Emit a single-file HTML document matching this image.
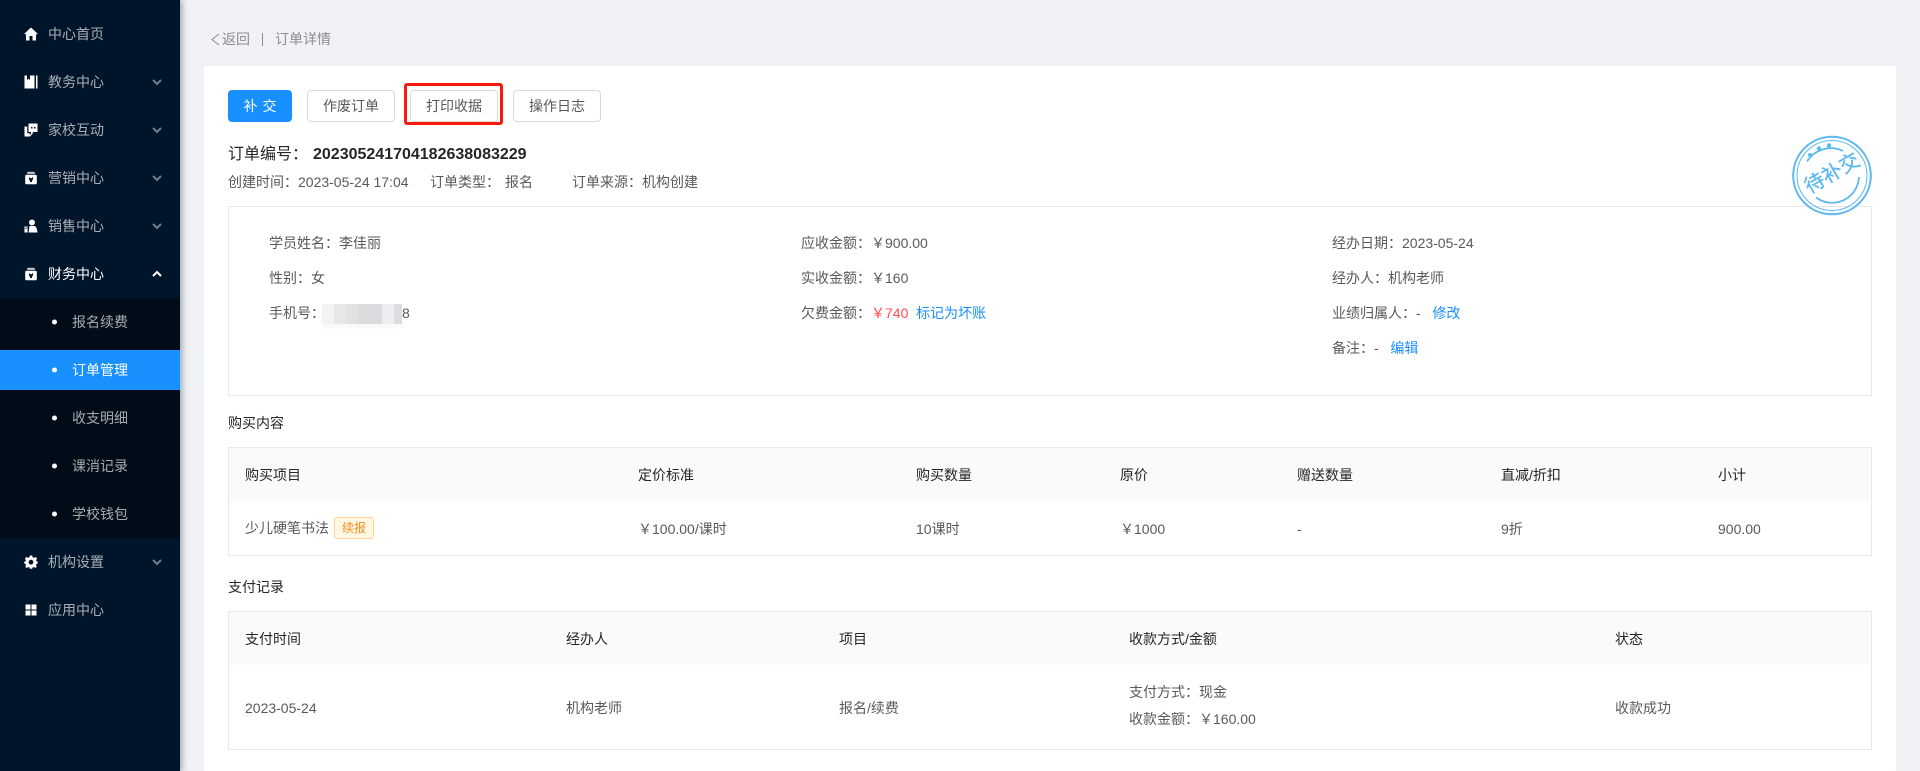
<!DOCTYPE html>
<html lang="zh"><head><meta charset="utf-8"><title>订单详情</title>
<style>
html,body{margin:0;padding:0}
body{width:1920px;height:771px;overflow:hidden;position:relative;background:#f0f2f5;font-family:"Liberation Sans","Noto Sans CJK SC",sans-serif;font-size:14px;color:#595959}
.t{position:absolute;white-space:nowrap;line-height:20px;transform:translateY(-10px)}
#side{position:absolute;left:0;top:0;width:180px;height:771px;background:#001529;box-shadow:2px 0 6px rgba(0,21,41,.35)}
#sub{position:absolute;left:0;top:298px;width:180px;height:240px;background:#000c17}
#act{position:absolute;left:0;top:350px;width:180px;height:40px;background:#1890ff}
.m{position:absolute;left:48px;font-size:14px;color:rgba(255,255,255,.65);line-height:20px;transform:translateY(-10px);white-space:nowrap}
.s{left:72px}
.dot{position:absolute;left:52px;width:5px;height:5px;border-radius:50%;background:#fff;transform:translateY(-2.5px)}
.ic{position:absolute;left:24px;width:14px;height:14px;transform:translateY(-7px)}
.ch{position:absolute;left:152px;width:10px;height:7px;transform:translateY(-3.5px)}
#card{position:absolute;left:204px;top:66px;width:1692px;height:705px;background:#fff;border-radius:2px}
.b{position:absolute;top:90px;height:32px;box-sizing:border-box;border:1px solid #d9d9d9;border-radius:4px;background:#fff;text-align:center;line-height:30px;font-size:14px;color:#595959;width:88px}
.box{position:absolute;box-sizing:border-box;border:1px solid #e8e8e8;left:228px;width:1644px}
.hd{position:absolute;left:229px;width:1642px;height:53px;background:#fafafa}
.h{color:#262626;font-size:14px}
.l{font-size:14px;color:#595959}
.sec{color:#262626;font-size:14px}
.blue{color:#1890ff}
</style></head><body>
<div id="side">
<div id="sub"></div><div id="act"></div>
<svg class="ic" style="top:34px" viewBox="0 0 14 14"><path fill="#fff" d="M7 0.500 0.400 6.600 1.200 7.600 2 7V13.500H5.500V9H8.500V13.500H12V7L12.800 7.600 13.600 6.600Z"/></svg>
<div class="m" style="top:34px">中心首页</div>
<svg class="ic" style="top:82px" viewBox="0 0 14 14"><path fill="#fff" d="M0.500 0.500H10.500V13.500H0.500ZM3 0.500V5L4.500 3.800 6 5V0.500ZM12 0.500H13.500V13.500H12Z" fill-rule="evenodd"/></svg>
<div class="m" style="top:82px">教务中心</div>
<svg class="ic" style="top:130px" viewBox="0 0 14 14"><path fill="#fff" fill-rule="evenodd" d="M4.500 0.500H13.500V9H9.500L7 11V9H4.500ZM7 4V5.500H8.500V4ZM10 4V5.500H11.500V4ZM0.500 3.500H3.200V10.300H5.800V12L8 10.300H9.200L6 13.500H0.500Z"/></svg>
<div class="m" style="top:130px">家校互动</div>
<svg class="ic" style="top:178px" viewBox="0 0 14 14"><path fill="#b8bcc2" d="M3.500 0.800H10.500L11 3H3Z"/><path fill="#fff" fill-rule="evenodd" d="M2.500 3.800H11.500Q12.800 3.800 12.800 5.100V12Q12.800 13.300 11.500 13.300H2.500Q1.200 13.300 1.200 12V5.100Q1.200 3.800 2.500 3.800ZM5 6V8.500L6 9.500V11H8V9.500L9 8.500V6L7 7.500Z"/></svg>
<div class="m" style="top:178px">营销中心</div>
<svg class="ic" style="top:226px" viewBox="0 0 14 14"><path fill="#fff" fill-rule="evenodd" d="M8 0.500A3 3 0 1 1 7.990 6.500 3 3 0 0 1 8 0.500ZM5.500 7H10.500Q13 7.500 13.500 13.500H4.500ZM0.500 7.500H3.500V13.500H0.500ZM1.500 8.500V10H2.500V8.500Z"/></svg>
<div class="m" style="top:226px">销售中心</div>
<svg class="ic" style="top:274px" viewBox="0 0 14 14"><path fill="#b8bcc2" d="M3.500 0.800H10.500L11 3H3Z"/><path fill="#fff" fill-rule="evenodd" d="M2.500 3.800H11.500Q12.800 3.800 12.800 5.100V12Q12.800 13.300 11.500 13.300H2.500Q1.200 13.300 1.200 12V5.100Q1.200 3.800 2.500 3.800ZM5 6V8.500L6 9.500V11H8V9.500L9 8.500V6L7 7.500Z"/></svg>
<div class="m" style="top:274px;color:#fff">财务中心</div>
<svg class="ch" style="top:82px" viewBox="0 0 10 7"><path d="M1 1.500 5 5.500 9 1.500" fill="none" stroke="rgba(255,255,255,.45)" stroke-width="2"/></svg>
<svg class="ch" style="top:130px" viewBox="0 0 10 7"><path d="M1 1.500 5 5.500 9 1.500" fill="none" stroke="rgba(255,255,255,.45)" stroke-width="2"/></svg>
<svg class="ch" style="top:178px" viewBox="0 0 10 7"><path d="M1 1.500 5 5.500 9 1.500" fill="none" stroke="rgba(255,255,255,.45)" stroke-width="2"/></svg>
<svg class="ch" style="top:226px" viewBox="0 0 10 7"><path d="M1 1.500 5 5.500 9 1.500" fill="none" stroke="rgba(255,255,255,.45)" stroke-width="2"/></svg>
<svg class="ch" style="top:274px" viewBox="0 0 10 7"><path d="M1 5.500 5 1.500 9 5.500" fill="none" stroke="#fff" stroke-width="2"/></svg>
<svg class="ch" style="top:562px" viewBox="0 0 10 7"><path d="M1 1.500 5 5.500 9 1.500" fill="none" stroke="rgba(255,255,255,.45)" stroke-width="2"/></svg>
<div class="dot" style="top:322px"></div><div class="m s" style="top:322px">报名续费</div>
<div class="dot" style="top:370px"></div><div class="m s" style="top:370px;color:#fff">订单管理</div>
<div class="dot" style="top:418px"></div><div class="m s" style="top:418px">收支明细</div>
<div class="dot" style="top:466px"></div><div class="m s" style="top:466px">课消记录</div>
<div class="dot" style="top:514px"></div><div class="m s" style="top:514px">学校钱包</div>
<svg class="ic" style="top:562px" viewBox="0 0 14 14"><path fill="#fff" fill-rule="evenodd" d="M5.800 0.500H8.200L8.600 2.300 10 2.900 11.600 1.900 13.100 3.700 12 5.200 12.500 6.200 13.800 6.800V8.200L12.500 9 12 10.300 12.800 11.800 11.300 13 9.900 12 8.600 12.500 8.200 13.800H5.800L5.400 12.500 4.100 12 2.700 13 1.200 11.800 2 10.300 1.500 9 0.200 8.200V6.800L1.500 6.200 2 5.200 0.900 3.700 2.400 1.900 4 2.900 5.400 2.300ZM7 4.800A2.400 2.400 0 1 0 7.010 9.600 2.400 2.400 0 0 0 7 4.800Z"/></svg>
<div class="m" style="top:562px">机构设置</div>
<svg class="ic" style="top:610px" viewBox="0 0 14 14"><path fill="#fff" d="M1.500 1.500H6.500V6.500H1.500ZM7.500 1.500H12.500V6.500H7.500ZM1.500 7.500H6.500V12.500H1.500ZM7.500 7.500H12.500V12.500H7.500Z"/></svg>
<div class="m" style="top:610px">应用中心</div>
</div>

<svg style="position:absolute;left:210px;top:33px" width="11" height="13" viewBox="0 0 11 13"><path d="M9 1 2 6.500 9 12" fill="none" stroke="#8c8c8c" stroke-width="1"/></svg>
<div class="t" style="left:222px;top:39px;color:#8c8c8c;font-size:14px">返回</div>
<div style="position:absolute;left:262px;top:33px;width:1px;height:13px;background:#8c8c8c"></div>
<div class="t" style="left:275px;top:39px;color:#8c8c8c;font-size:14px">订单详情</div>

<div id="card"></div>
<div class="b" style="left:228px;width:64px;background:#1890ff;border-color:#1890ff;color:#fff;letter-spacing:5px;text-indent:5px">补交</div>
<div class="b" style="left:307px">作废订单</div>
<div class="b" style="left:410px">打印收据</div>
<div style="position:absolute;left:404px;top:83px;width:99px;height:42px;box-sizing:border-box;border:3px solid #f5190f;border-radius:3px"></div>
<div class="b" style="left:513px">操作日志</div>

<div class="t" style="left:228px;top:155px;font-size:16px;color:#262626">订单编号：</div>
<div class="t" style="left:313px;top:155px;font-size:16px;font-weight:bold;color:#262626">202305241704182638083229</div>
<div class="t" style="left:228px;top:182px">创建时间：2023-05-24 17:04</div>
<div class="t" style="left:430px;top:182px">订单类型：</div><div class="t" style="left:505px;top:182px">报名</div>
<div class="t" style="left:572px;top:182px">订单来源：机构创建</div>

<div class="box" style="top:206px;height:190px"></div>
<svg style="position:absolute;left:1790px;top:134px" width="84" height="84" viewBox="0 0 84 84">
<circle cx="42" cy="41.500" r="38.800" fill="none" stroke="#5cb8f0" stroke-width="2"/>
<circle cx="42" cy="41.500" r="35" fill="none" stroke="#5cb8f0" stroke-width="1"/>
<path d="M17 27.500A28 28 0 0 1 53 17" fill="none" stroke="#5cb8f0" stroke-width="1.800"/>
<path d="M69 43A27 27 0 0 1 26 63.500" fill="none" stroke="#5cb8f0" stroke-width="1.800"/>
<circle cx="20" cy="21" r="2" fill="#5cb8f0"/><circle cx="29" cy="14.500" r="2.200" fill="#5cb8f0"/><circle cx="39" cy="11.500" r="2.200" fill="#5cb8f0"/>
<text x="42" y="46" text-anchor="middle" font-size="20" fill="#5cb8f0" stroke="#5cb8f0" stroke-width=".3" font-family="Liberation Sans,Noto Sans CJK SC,sans-serif" transform="rotate(-30 42 39)">待补交</text>
</svg>

<div class="t" style="left:269px;top:243px">学员姓名：李佳丽</div>
<div class="t" style="left:269px;top:278px">性别：女</div>
<div class="t" style="left:269px;top:313px">手机号：</div>
<div style="position:absolute;left:322px;top:304px;width:80px;height:20px;background:linear-gradient(90deg,#f3f3f3 0 15%,#e8e8e8 15% 30%,#e2e2e2 30% 45%,#dcdcdc 45% 60%,#dadce0 60% 75%,#eeeeee 75% 90%,#dcdde2 90%);box-shadow:0 4px 4px #f8f8f8"></div>
<div class="t" style="left:402px;top:313px">8</div>

<div class="t" style="left:801px;top:243px">应收金额：￥900.00</div>
<div class="t" style="left:801px;top:278px">实收金额：￥160</div>
<div class="t" style="left:801px;top:313px">欠费金额：<span style="color:#ff4d4f">￥740</span>&nbsp;&nbsp;<span class="blue">标记为坏账</span></div>

<div class="t" style="left:1332px;top:243px">经办日期：2023-05-24</div>
<div class="t" style="left:1332px;top:278px">经办人：机构老师</div>
<div class="t" style="left:1332px;top:313px">业绩归属人：-&nbsp;&nbsp;&nbsp;<span class="blue">修改</span></div>
<div class="t" style="left:1332px;top:348px">备注：-&nbsp;&nbsp;&nbsp;<span class="blue">编辑</span></div>

<div class="t sec" style="left:228px;top:423px">购买内容</div>
<div class="box" style="top:447px;height:109px"></div>
<div class="hd" style="top:448px"></div>
<div class="t h" style="left:245px;top:475px">购买项目</div>
<div class="t h" style="left:638px;top:475px">定价标准</div>
<div class="t h" style="left:916px;top:475px">购买数量</div>
<div class="t h" style="left:1120px;top:475px">原价</div>
<div class="t h" style="left:1297px;top:475px">赠送数量</div>
<div class="t h" style="left:1501px;top:475px">直减/折扣</div>
<div class="t h" style="left:1718px;top:475px">小计</div>
<div class="t l" style="left:245px;top:528px">少儿硬笔书法</div>
<div style="position:absolute;left:334px;top:517px;width:40px;height:22px;box-sizing:border-box;border:1px solid #ffd591;background:#fff7e6;border-radius:3px;color:#fa8c16;font-size:12px;line-height:20px;text-align:center">续报</div>
<div class="t l" style="left:638px;top:529px">￥100.00/课时</div>
<div class="t l" style="left:916px;top:529px">10课时</div>
<div class="t l" style="left:1120px;top:529px">￥1000</div>
<div class="t l" style="left:1297px;top:529px">-</div>
<div class="t l" style="left:1501px;top:529px">9折</div>
<div class="t l" style="left:1718px;top:529px">900.00</div>

<div class="t sec" style="left:228px;top:587px">支付记录</div>
<div class="box" style="top:611px;height:139px"></div>
<div class="hd" style="top:612px"></div>
<div class="t h" style="left:245px;top:639px">支付时间</div>
<div class="t h" style="left:566px;top:639px">经办人</div>
<div class="t h" style="left:839px;top:639px">项目</div>
<div class="t h" style="left:1129px;top:639px">收款方式/金额</div>
<div class="t h" style="left:1615px;top:639px">状态</div>
<div class="t l" style="left:245px;top:708px">2023-05-24</div>
<div class="t l" style="left:566px;top:708px">机构老师</div>
<div class="t l" style="left:839px;top:708px">报名/续费</div>
<div class="t l" style="left:1129px;top:692px">支付方式：现金</div>
<div class="t l" style="left:1129px;top:719px">收款金额：￥160.00</div>
<div class="t l" style="left:1615px;top:708px">收款成功</div>
</body></html>
